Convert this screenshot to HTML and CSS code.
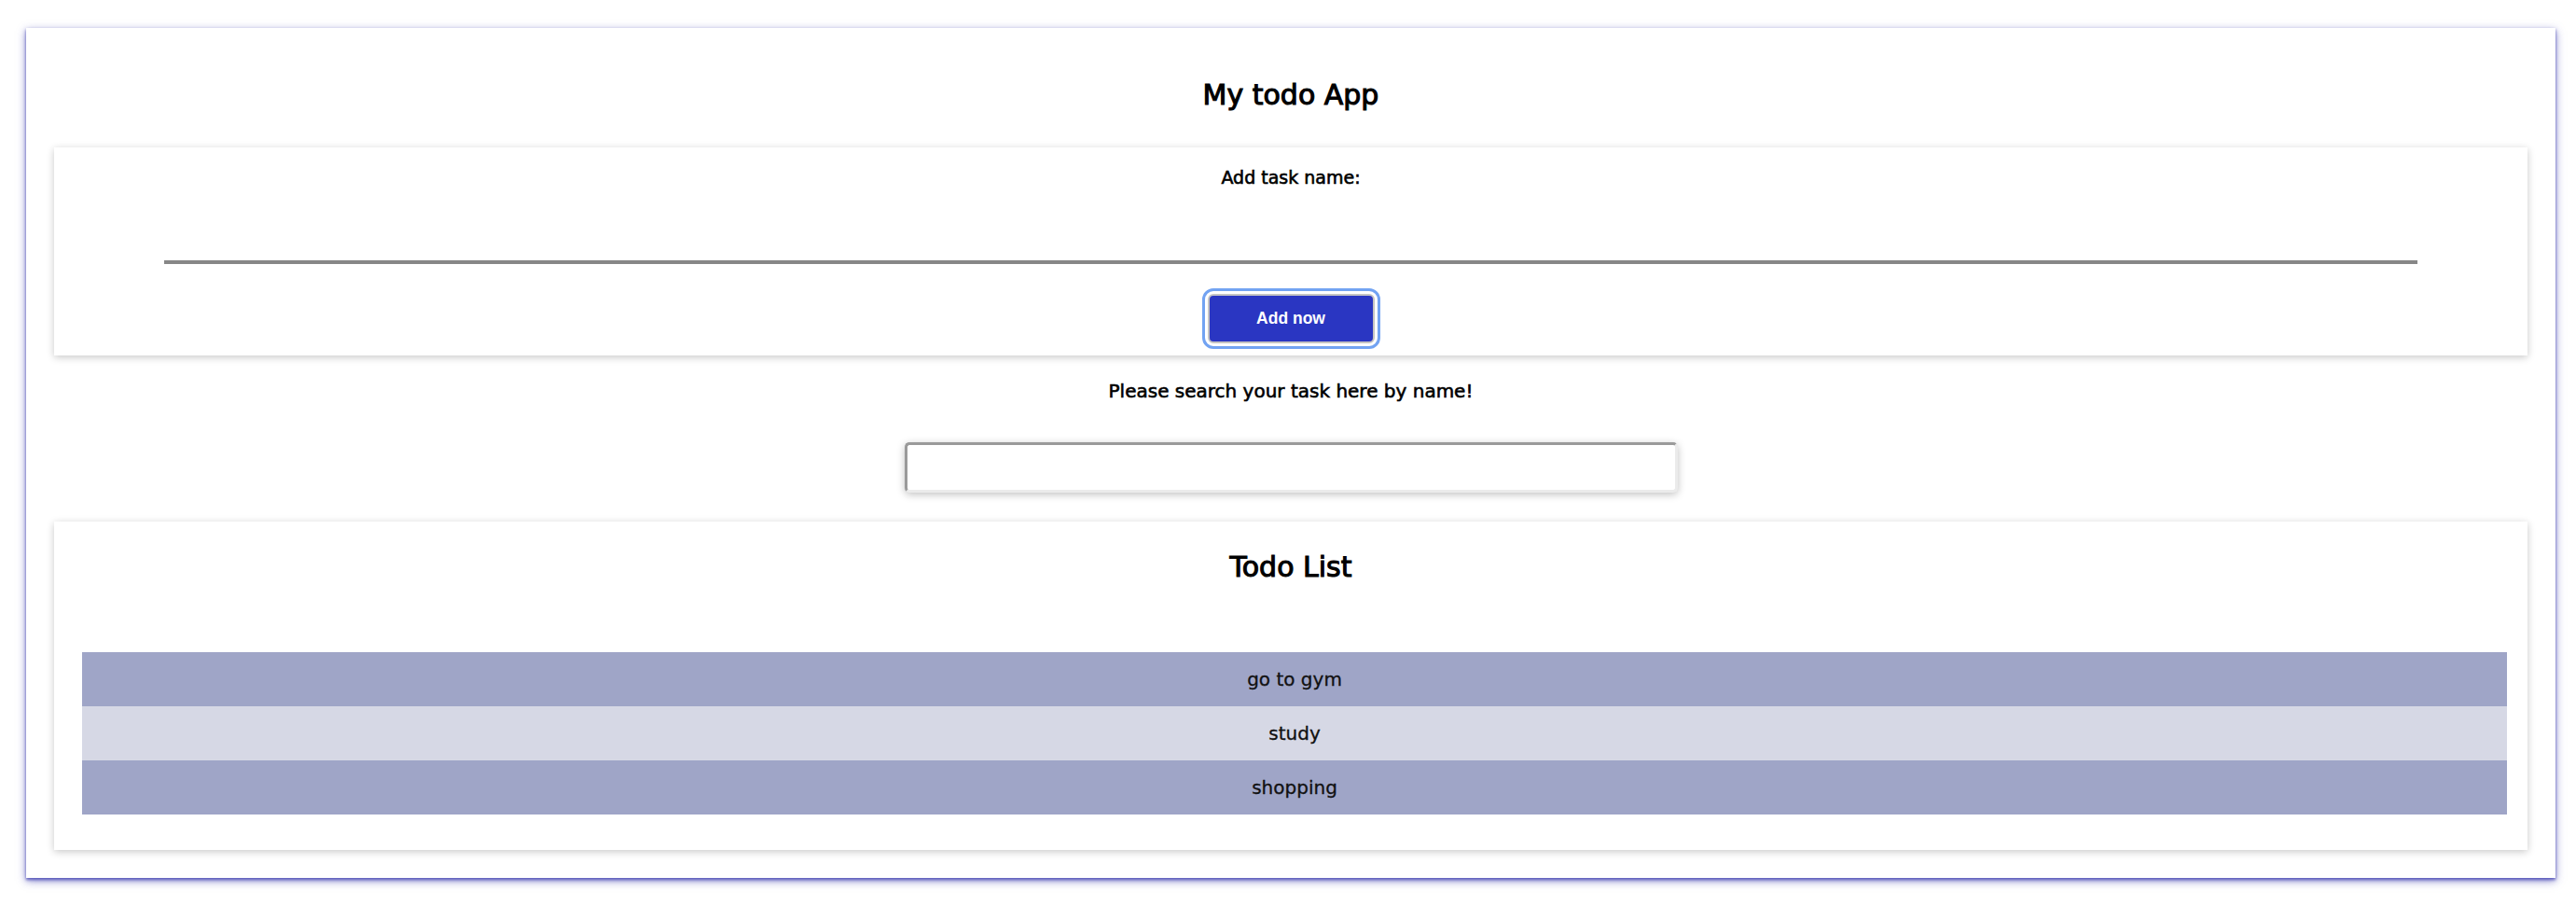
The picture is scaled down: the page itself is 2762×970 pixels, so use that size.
FILE: index.html
```html
<!DOCTYPE html>
<html lang="en">
<head>
<meta charset="utf-8">
<title>My todo App</title>
<link rel="stylesheet" href="styles.css">
</head>
<body>
<div class="app">
  <h1 class="app-title">My todo App</h1>
  <section class="card add-card">
    <label class="label" for="task">Add task name:</label>
    <input id="task" class="task-input" type="text">
    <button class="add-btn" type="button">Add now</button>
  </section>
  <div class="search">
    <p class="label search-label">Please search your task here by name!</p>
    <input class="search-input" type="text">
  </div>
  <section class="card list-card">
    <h2 class="list-title">Todo List</h2>
    <ul class="todo-list">
      <li class="todo dark">go to gym</li>
      <li class="todo light">study</li>
      <li class="todo dark">shopping</li>
    </ul>
  </section>
</div>
</body>
</html>
```

FILE: styles.css
```css
* { box-sizing: border-box; }

html, body {
  margin: 0;
  padding: 0;
  background: #ffffff;
}

body {
  font-family: "DejaVu Sans", "Liberation Sans", sans-serif;
  color: #000;
}

.app {
  margin: 30px 22px 28px 28px;
  padding: 54px 30px 30px;
  background: #fff;
  box-shadow: 0 2px 3px rgba(60, 60, 175, 0.75), 0 3px 9px rgba(60, 60, 175, 0.6);
}

.app-title {
  margin: 0 0 38px;
  font-size: 30px;
  line-height: 36px;
  font-weight: normal;
  text-align: center;
  -webkit-text-stroke: 1.1px #000;
}

.card {
  background: #fff;
  box-shadow: 0 2px 8px rgba(0, 0, 0, 0.22);
}

.add-card {
  display: flex;
  flex-direction: column;
  align-items: center;
  padding: 21px 118px 13px;
}

.label {
  display: block;
  margin: 0;
  font-size: 19px;
  line-height: 22px;
  text-align: center;
  -webkit-text-stroke: 0.6px #000;
}

.task-input {
  width: 100%;
  height: 44px;
  margin: 38px 0 0;
  border: none;
  border-bottom: 4px solid #878787;
  background: transparent;
  outline: none;
}

.add-btn {
  width: 179px;
  height: 53px;
  margin-top: 32px;
  background: #2a36c2;
  color: #fff;
  border: 2px solid #c4c4c4;
  border-radius: 6px;
  font-family: "Liberation Sans", Arial, sans-serif;
  font-weight: bold;
  font-size: 17.5px;
  outline: 3px solid #72a3f2;
  outline-offset: 3px;
}

.search {
  display: flex;
  flex-direction: column;
  align-items: center;
  padding: 27px 0 31px;
}

.search-label {
  font-size: 20px;
  line-height: 23px;
}

.search-input {
  width: 829px;
  height: 54px;
  margin-top: 43px;
  border: 3px solid;
  border-color: #9a9a9a #ebebeb #ebebeb #9a9a9a;
  border-radius: 5px;
  background: #fff;
  box-shadow: 0 2px 9px rgba(0, 0, 0, 0.25);
  outline: none;
}

.list-card {
  padding: 31px 0 38px;
}

.list-title {
  margin: 0 0 73px;
  font-size: 30px;
  line-height: 36px;
  font-weight: normal;
  text-align: center;
  -webkit-text-stroke: 1.1px #000;
}

.todo-list {
  list-style: none;
  margin: 0 22px 0 30px;
  padding: 0;
}

.todo {
  height: 58px;
  line-height: 58px;
  font-size: 20px;
  text-align: center;
  color: #111;
  -webkit-text-stroke: 0.3px #111;
}

.todo.dark { background: #9fa5c7; }
.todo.light { background: #d6d8e5; }
```
